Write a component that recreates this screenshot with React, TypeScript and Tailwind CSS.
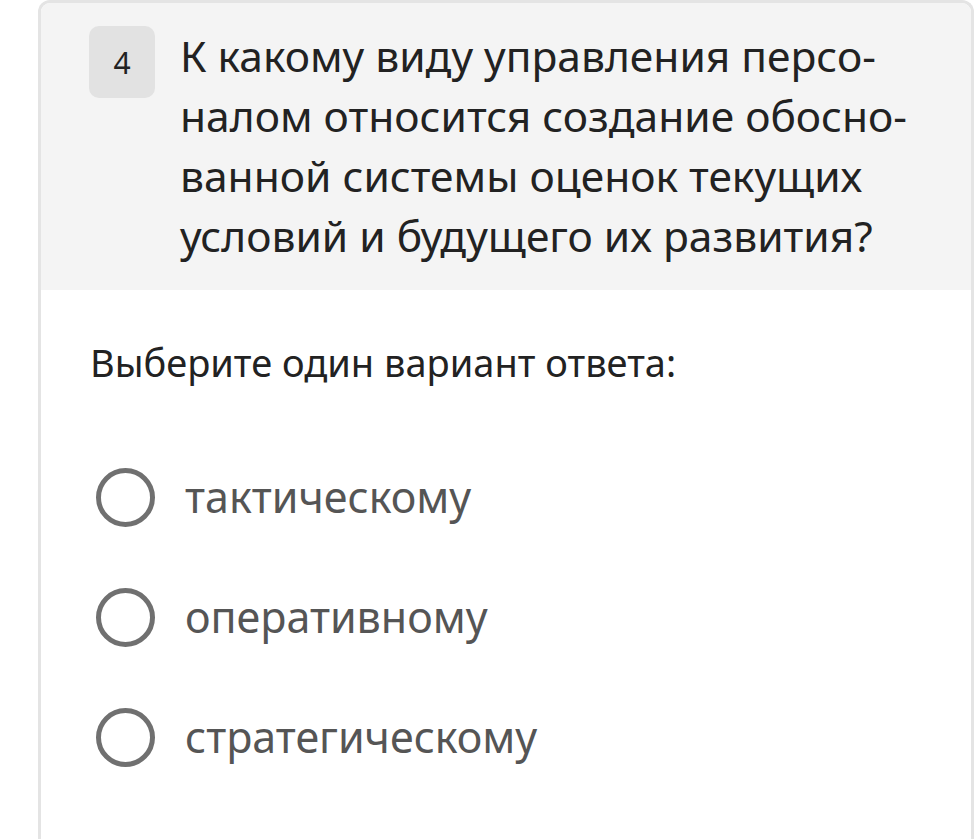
import React from "react";

const options = ["тактическому", "оперативному", "стратегическому"];

const QuestionCard: React.FC = () => {
  return (
    <div className="h-[839px] overflow-hidden bg-white pl-[38px] pr-[5px] font-['Noto_Sans',sans-serif]">
      <div className="h-[860px] rounded-t-[12px] border-[3px] border-b-0 border-[#e4e4e4] overflow-hidden">
        {/* question header */}
        <div className="flex items-start h-[287px] bg-[#f4f4f4] pl-[48px] pt-[23px]">
          <div className="flex items-center justify-center w-[66px] h-[72px] shrink-0 rounded-[10px] bg-[#e2e2e2] text-[30px] text-[#222]">
            4
          </div>
          <p className="ml-[25px] text-[42.5px] leading-[60px] text-[#222]">
            К какому виду управления персо-
            <br />
            налом относится создание обосно-
            <br />
            ванной системы оценок текущих
            <br />
            условий и будущего их развития?
          </p>
        </div>

        {/* answers */}
        <div className="pl-[49px] pt-[48px]">
          <p className="text-[38px] leading-[48px] text-[#222]">Выберите один вариант ответа:</p>
          <div className="mt-[51px] flex flex-col">
            {options.map((o) => (
              <label key={o} className="flex items-center h-[120px]">
                <span className="ml-[6px] w-[59px] h-[59px] shrink-0 rounded-full border-[5px] border-[#707070]" />
                <span className="ml-[30px] text-[43px] leading-[60px] text-[#555]">{o}</span>
              </label>
            ))}
          </div>
        </div>
      </div>
    </div>
  );
};

export default function App() {
  return <QuestionCard />;
}
